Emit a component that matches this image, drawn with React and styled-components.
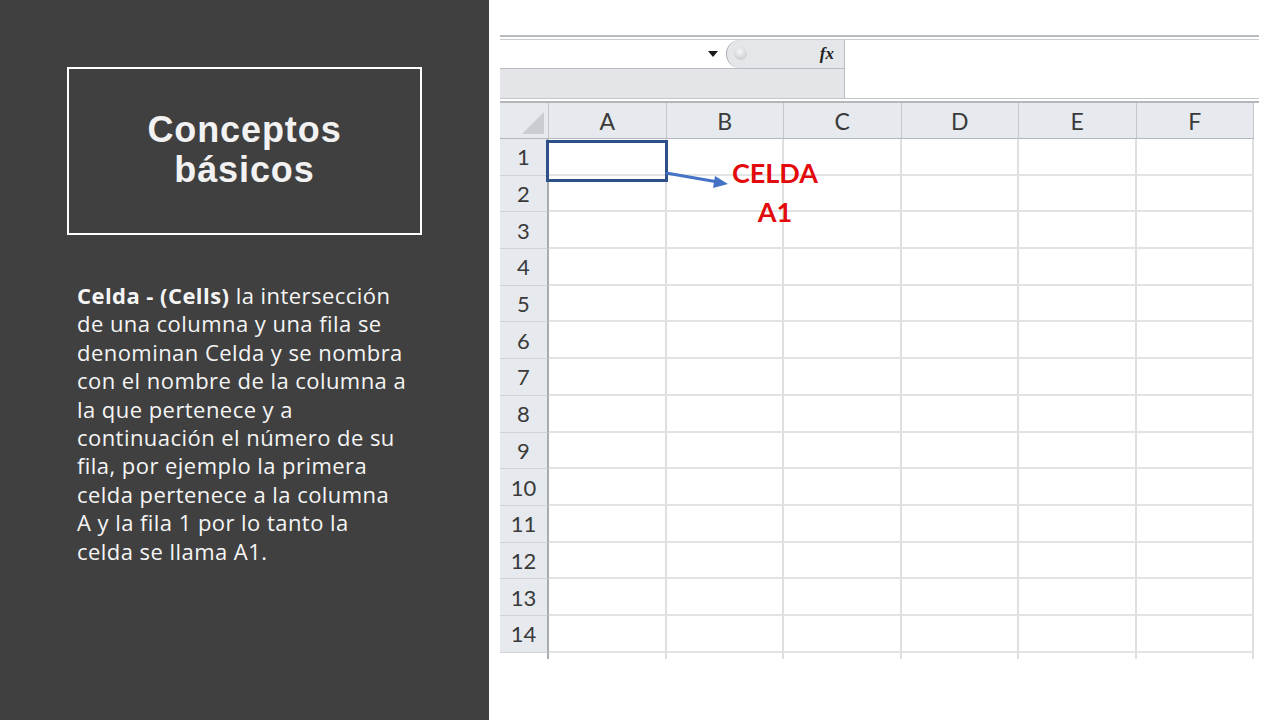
import React from "react";
import styled, { createGlobalStyle } from "styled-components";

const Global = createGlobalStyle`
  html, body { margin: 0; padding: 0; }
  body { width: 1280px; height: 720px; overflow: hidden; background: #fff; }
`;

const Page = styled.div`
  display: flex;
  width: 1280px;
  height: 720px;
`;

const LeftPanel = styled.section`
  width: 489px;
  flex: none;
  background: #404040;
  box-sizing: border-box;
  padding: 67px 0 0 67px;
  display: flex;
  flex-direction: column;
`;

const TitleBox = styled.div`
  width: 355px;
  height: 168px;
  box-sizing: border-box;
  border: 2px solid #ffffff;
  display: flex;
  align-items: center;
  justify-content: center;
`;

const Title = styled.h1`
  margin: 0;
  padding-bottom: 2px;
  font-family: "Liberation Sans", Arial, sans-serif;
  font-weight: 700;
  font-size: 36px;
  line-height: 40px;
  letter-spacing: 0.9px;
  color: #f2f2f2;
  text-align: center;
`;

const Body = styled.p`
  margin: 46px 0 0 10px;
  font-family: "Open Sans", Lato, sans-serif;
  font-size: 22px;
  line-height: 28.4px;
  letter-spacing: 0.45px;
  color: #f5f5f5;
  white-space: nowrap;
`;

const Strong = styled.b`
  font-weight: 700;
`;

const RightPanel = styled.section`
  flex: 1;
  background: #ffffff;
  box-sizing: border-box;
  padding: 35px 0 0 11px;
`;

const Sheet = styled.div`
  width: 759px;
  display: flex;
  flex-direction: column;
`;

const Rule = styled.div`
  height: 2px;
  border-top: 2px solid #b8bbbf;
  border-bottom: 1px solid #c9ccd0;
`;

const FormulaArea = styled.div`
  display: flex;
  height: 58px;
`;

const NameColumn = styled.div`
  width: 344px;
  display: flex;
  flex-direction: column;
  border-right: 1px solid #b9bcc0;
`;

const NameRow = styled.div`
  height: 28px;
  display: flex;
  align-items: center;
  justify-content: flex-end;
  border-bottom: 1px solid #b9bcc0;
`;

const DropArrow = styled.span`
  width: 0;
  height: 0;
  border-left: 5px solid transparent;
  border-right: 5px solid transparent;
  border-top: 6px solid #1a1a1a;
  margin-right: 8px;
`;

const Pill = styled.div`
  width: 118px;
  height: 28px;
  box-sizing: border-box;
  background: #e4e6e9;
  border-left: 1px solid #a9adb2;
  border-radius: 14px 0 0 14px;
  display: flex;
  align-items: center;
  justify-content: space-between;
  padding: 0 10px 0 7px;
`;

const Knob = styled.span`
  width: 13px;
  height: 13px;
  margin-top: -2px;
  border-radius: 50%;
  background: radial-gradient(circle at 45% 35%, #f7f8f9 0%, #d6d9dc 55%, #c2c5c9 100%);
`;

const Fx = styled.span`
  font-family: "Liberation Serif", "Times New Roman", serif;
  font-style: italic;
  font-weight: 700;
  font-size: 17px;
  color: #222;
`;

const GrayRow = styled.div`
  flex: 1;
  background: #e3e5e8;
`;

const FormulaInput = styled.div`
  flex: 1;
  background: #ffffff;
`;

const HeaderRule = styled.div`
  height: 2px;
  border-top: 1px solid #c2c5c9;
  border-bottom: 2px solid #b3b6ba;
`;

const GridWrap = styled.div`
  position: relative;
`;

const Grid = styled.div`
  display: grid;
  grid-template-columns: 49px repeat(6, 117.5px);
  grid-template-rows: 36px repeat(14, 36.7px) 6px;
`;

const Corner = styled.div`
  background: #e6e9ed;
  border-right: 1px solid #c3c7cc;
  border-bottom: 1px solid #b5b9be;
  position: relative;
  &::after {
    content: "";
    position: absolute;
    right: 4px;
    bottom: 4px;
    width: 0;
    height: 0;
    border-left: 22px solid transparent;
    border-bottom: 22px solid #c9ccd0;
  }
`;

const ColHead = styled.div`
  background: #e6e9ed;
  border-right: 1px solid #c3c7cc;
  border-bottom: 1px solid #b5b9be;
  display: flex;
  align-items: center;
  justify-content: center;
  font-family: Lato, "Open Sans", sans-serif;
  font-size: 23px;
  color: #3a3a3a;
`;

const RowHead = styled.div`
  background: ${(p) => (p.$stub ? "transparent" : "#e6e9ed")};
  border-right: 2px solid #a8acb1;
  border-bottom: ${(p) => (p.$stub ? "none" : "1px solid #cfd2d6")};
  display: flex;
  align-items: center;
  justify-content: center;
  font-family: Lato, "Open Sans", sans-serif;
  font-size: 22px;
  color: #3a3a3a;
`;

const Cell = styled.div`
  border-right: 2px solid #dedfe0;
  border-bottom: ${(p) => (p.$stub ? "none" : "2px solid #e2e3e4")};
`;

const Selection = styled.div`
  position: absolute;
  left: 46px;
  top: 37px;
  width: 122px;
  height: 42px;
  box-sizing: border-box;
  border: 3px solid #2e5089;
`;

const Arrow = styled.svg`
  position: absolute;
  left: 166px;
  top: 62px;
  overflow: visible;
`;

const Callout = styled.div`
  position: absolute;
  left: 220px;
  top: 50px;
  width: 110px;
  text-align: center;
  font-family: Lato, "Open Sans", sans-serif;
  font-weight: 700;
  font-size: 27px;
  line-height: 39px;
  color: #e20a0a;
`;

const columns = ["A", "B", "C", "D", "E", "F"];
const rows = Array.from({ length: 14 }, (_, i) => i + 1);

export default function App() {
  return (
    <>
      <Global />
      <Page>
        <LeftPanel>
          <TitleBox>
            <Title>
              Conceptos
              <br />
              básicos
            </Title>
          </TitleBox>
          <Body>
            <Strong>Celda - (Cells)</Strong> la intersección
            <br />
            de una columna y una fila se
            <br />
            denominan Celda y se nombra
            <br />
            con el nombre de la columna a
            <br />
            la que pertenece y a
            <br />
            continuación el número de su
            <br />
            fila, por ejemplo la primera
            <br />
            celda pertenece a la columna
            <br />
            A y la fila 1 por lo tanto la
            <br />
            celda se llama A1.
          </Body>
        </LeftPanel>
        <RightPanel>
          <Sheet>
            <Rule />
            <FormulaArea>
              <NameColumn>
                <NameRow>
                  <DropArrow />
                  <Pill>
                    <Knob />
                    <Fx>fx</Fx>
                  </Pill>
                </NameRow>
                <GrayRow />
              </NameColumn>
              <FormulaInput />
            </FormulaArea>
            <HeaderRule />
            <GridWrap>
              <Grid>
                <Corner />
                {columns.map((c) => (
                  <ColHead key={c}>{c}</ColHead>
                ))}
                {rows.map((r) => (
                  <React.Fragment key={r}>
                    <RowHead>{r}</RowHead>
                    {columns.map((c) => (
                      <Cell key={c + r} />
                    ))}
                  </React.Fragment>
                ))}
                <RowHead $stub />
                {columns.map((c) => (
                  <Cell key={"stub" + c} $stub />
                ))}
              </Grid>
              <Selection />
              <Arrow width="64" height="24" viewBox="0 0 64 24">
                <line x1="0" y1="8" x2="52" y2="17" stroke="#4472c4" strokeWidth="3" />
                <polygon points="62,19 49,11 47,23" fill="#4472c4" />
              </Arrow>
              <Callout>
                CELDA
                <br />
                A1
              </Callout>
            </GridWrap>
          </Sheet>
        </RightPanel>
      </Page>
    </>
  );
}
